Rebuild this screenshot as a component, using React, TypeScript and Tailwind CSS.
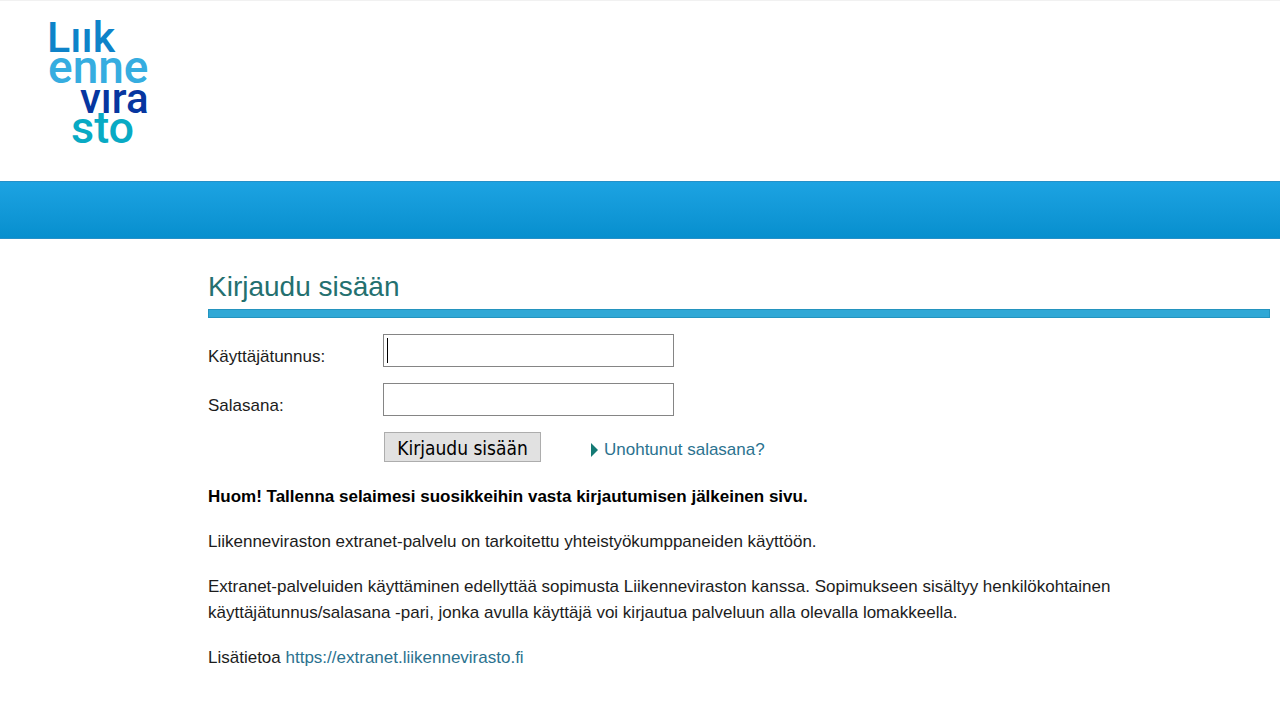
import type { ReactNode } from "react";

function Logo() {
  return (
    <a href="#" className="inline-block">
      <svg
        width="112"
        height="150"
        viewBox="0 0 112 150"
        role="img"
        aria-label="Liikennevirasto"
        className="block font-['Roboto',sans-serif] font-medium"
      >
        <text x="7" y="43" fontSize="43" fill="#0e83c9">Lıık</text>
        <text x="8" y="74" fontSize="46" fill="#36ade0">enne</text>
        <text x="40" y="104" fontSize="42" fill="#0636a0">vıra</text>
        <text x="31" y="134" fontSize="45" fill="#08aac4">sto</text>
      </svg>
    </a>
  );
}

function Field({ id, label, type, children }: { id: string; label: string; type: string; children?: ReactNode }) {
  return (
    <div className="flex items-center">
      <label htmlFor={id} className="w-[175px] shrink-0 pt-3 leading-5">
        {label}
      </label>
      <div className="relative w-[291px]">
        <input
          id={id}
          type={type}
          className="block h-[33px] w-full border border-[#858585] bg-white px-1 outline-none"
        />
        {children}
      </div>
    </div>
  );
}

export default function App() {
  return (
    <div className="min-h-screen border-t border-[#f1f1f1] bg-white font-['Liberation_Sans',Arial,sans-serif] text-[17px] leading-[26px] text-[#1c1c1c]">
      <header>
        <div className="h-[180px] pt-2 pl-10">
          <Logo />
        </div>
        <div className="h-[58px] border-y border-t-[#2590c8] border-b-[#2590c8] bg-linear-to-b from-[#1ca3e2] to-[#068fce]" />
      </header>

      <main className="pt-7 pr-[10px] pl-[208px]">
        <h1 className="text-[28px] leading-10 text-[#24706f]">Kirjaudu sisään</h1>
        <div className="mt-[2px] h-[9px] border border-[#2494bf] bg-[#30a8d6]" />

        <form className="mt-4 flex flex-col gap-4" onSubmit={(event) => event.preventDefault()}>
          <Field id="username" label="Käyttäjätunnus:" type="text">
            <span aria-hidden="true" className="absolute top-1 left-1 h-[25px] w-px bg-black" />
          </Field>
          <Field id="password" label="Salasana:" type="password" />
          <div className="flex items-center pl-44">
            <button
              type="submit"
              className="h-[30px] w-[157px] border border-[#adadad] bg-[#e1e1e1] pt-[2px] font-['DejaVu_Sans_Condensed','Noto_Sans',sans-serif] text-[19px] leading-[26px] text-black"
            >
              Kirjaudu sisään
            </button>
            <a href="#" className="ml-[50px] flex items-center gap-[6px] pt-[6px] leading-6 text-[#2b728f]">
              <svg width="7" height="14" viewBox="0 0 7 14" aria-hidden="true">
                <path d="M0 0L7 7L0 14Z" fill="#147a75" />
              </svg>
              Unohtunut salasana?
            </a>
          </div>
        </form>

        <div className="mt-[22px] flex flex-col gap-[19px]">
          <p className="font-bold text-black">Huom! Tallenna selaimesi suosikkeihin vasta kirjautumisen jälkeinen sivu.</p>
          <p>Liikenneviraston extranet-palvelu on tarkoitettu yhteistyökumppaneiden käyttöön.</p>
          <p className="max-w-[920px]">
            Extranet-palveluiden käyttäminen edellyttää sopimusta Liikenneviraston kanssa. Sopimukseen sisältyy henkilökohtainen
            käyttäjätunnus/salasana -pari, jonka avulla käyttäjä voi kirjautua palveluun alla olevalla lomakkeella.
          </p>
          <p>
            Lisätietoa{" "}
            <a href="https://extranet.liikennevirasto.fi" className="text-[#2b728f]">
              https://extranet.liikennevirasto.fi
            </a>
          </p>
        </div>
      </main>
    </div>
  );
}
